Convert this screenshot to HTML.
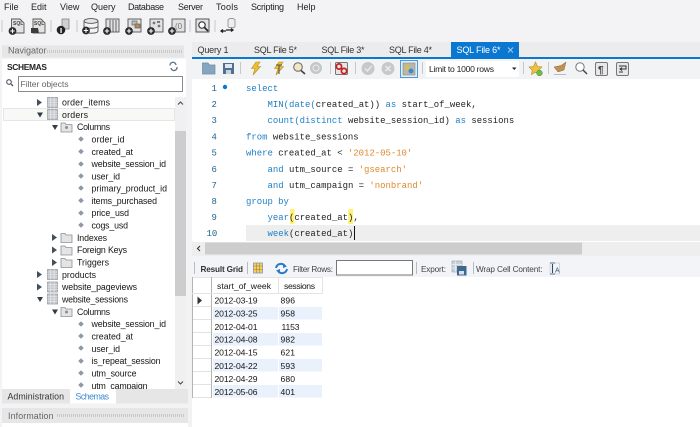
<!DOCTYPE html>
<html><head><meta charset="utf-8"><style>
html,body{margin:0;padding:0;width:700px;height:427px;overflow:hidden;background:#fff}
svg{display:block;filter:blur(.3px)}
text{font-family:"Liberation Sans",sans-serif;font-size:8.8px;fill:#151515}
.m text{font-size:9px;fill:#222}
.c text{font-family:"Liberation Mono",monospace;font-size:8.95px;fill:#222}
.c .k{fill:#1f7fc4}.c .s{fill:#e0882c}.c .n{fill:#1f628e}
.r text{font-size:8.6px;fill:#151515}
</style></head><body>
<svg width="700" height="427" viewBox="0 0 700 427" xmlns="http://www.w3.org/2000/svg">
<defs>
<g id="plus"><circle cx="0" cy="0" r="3.9" fill="#2a2a2a"/><path d="M-2.200 0H2.200M0-2.200V2.200" stroke="#fff" stroke-width="1.100"/></g>
<g id="tbl"><rect x="0" y="0" width="10" height="10" fill="#c3c7cc" stroke="#8f959c" stroke-width=".7"/><path d="M3.300 0V10M6.600 0V10M0 2.500H10M0 5H10M0 7.500H10" stroke="#f0f0f0" stroke-width=".6"/></g>
<path id="d" d="M0-2.800L2.800 0 0 2.800-2.800 0Z" fill="#8d99a8"/>
<path id="ar" d="M0-3.500L5 0 0 3.500Z" fill="#444f5c"/>
<path id="ad" d="M-3-2H3L0 3Z" fill="#333d4a"/>
<g id="fold"><path d="M0 1H4L5 2.500H11V10H0Z" fill="#e4e4e4" stroke="#8a8f96" stroke-width=".8"/></g>
<g id="bolt"><path d="M7 0L11 0 8 4.500H11.500L4 13 6 6.500H2.500Z" fill="#f0c030" stroke="#b58a20" stroke-width=".6"/></g>
</defs>

<rect width="700" height="427" fill="#f3f3f6"/>
<g class="m">
<text x="4" y="10">File</text><text x="31" y="10">Edit</text><text x="60" y="10">View</text><text x="91" y="10">Query</text><text x="128" y="10" textLength="36">Database</text><text x="178" y="10" textLength="25">Server</text><text x="216" y="10" textLength="22">Tools</text><text x="251" y="10" textLength="33">Scripting</text><text x="297" y="10">Help</text>
</g>

<!-- main toolbar -->
<g stroke="#c4c8cc" stroke-width="1"><path d="M2 20V32M51 20V32M77 20V32M190 20V32M215 20V32"/></g>
<g>
<path d="M11.500 19H20L24 23V33H11.500Z" fill="#e2e2e2" stroke="#555" stroke-width=".9"/><text x="13" y="25" style="font-size:5px;font-weight:bold;fill:#444">SQL</text><use href="#plus" x="12.500" y="31"/>
<path d="M33 19H41L45 23V33H33Z" fill="#e2e2e2" stroke="#555" stroke-width=".9"/><text x="34" y="25" style="font-size:5px;font-weight:bold;fill:#444">SQL</text><path d="M31 28H38L39 33H31Z" fill="#3c3c3c"/>
<rect x="62" y="19" width="7" height="10" fill="#d0d0d0" stroke="#777" stroke-width=".7"/><circle cx="61" cy="30" r="4.300" fill="#222"/><rect x="60.400" y="28" width="1.300" height="5" fill="#fff"/>
<ellipse cx="91" cy="21" rx="7" ry="2.400" fill="#e4e4e4" stroke="#555" stroke-width=".9"/><path d="M84 21V31C84 34 98 34 98 31V21M84 26C84 29 98 29 98 26" fill="none" stroke="#555" stroke-width=".9"/><use href="#plus" x="86" y="30.500"/>
<rect x="106" y="19" width="13" height="13" fill="#e2e2e2" stroke="#555" stroke-width=".9"/><path d="M110 20V32M113 20V32M116 20V32" stroke="#666" stroke-width="1"/><use href="#plus" x="107" y="31"/>
<rect x="128" y="19" width="13" height="13" fill="#e2e2e2" stroke="#555" stroke-width=".9"/><rect x="132" y="21" width="5" height="4" fill="#bbb" stroke="#666" stroke-width=".7"/><rect x="135" y="24" width="5" height="4" fill="#b58a50" stroke="#666" stroke-width=".7"/><use href="#plus" x="129" y="31"/>
<rect x="150" y="19" width="13" height="13" fill="#e2e2e2" stroke="#555" stroke-width=".9"/><circle cx="154" cy="23" r="1.400" fill="#777"/><circle cx="159" cy="26" r="1.400" fill="#777"/><rect x="157" y="21" width="3" height="2" fill="#777"/><use href="#plus" x="151" y="31"/>
<rect x="172" y="19" width="13" height="13" fill="#e2e2e2" stroke="#555" stroke-width=".9"/><text x="175" y="29" style="font-size:8px;fill:#777">(0</text><use href="#plus" x="172" y="31"/>
<rect x="196" y="19" width="13" height="13" fill="#e2e2e2" stroke="#555" stroke-width="1"/><circle cx="202" cy="25" r="3.200" fill="#fff" stroke="#333" stroke-width="1.200"/><path d="M204.500 27.500L208 31" stroke="#222" stroke-width="1.600"/>
<ellipse cx="231.500" cy="20" rx="3.500" ry="1.500" fill="#eee" stroke="#777" stroke-width=".7"/><path d="M228 20V26.500C228 28 235 28 235 26.500V20" fill="#eee" stroke="#777" stroke-width=".7"/><path d="M221 31H226M223 29.500L221 31 223 32.500M226 30H233M231 28.500L233 30 231 31.500" stroke="#222" stroke-width="1.300" fill="none"/>
</g>

<!-- left panel -->
<rect x="2" y="45.500" width="182" height="12" fill="#e6e6e6"/>
<path d="M47 51.500H183" stroke="#c8c8c8" stroke-width="3" stroke-dasharray="1 1"/>
<text x="8" y="53.500" style="fill:#666;font-size:9px">Navigator</text>
<rect x="2" y="59" width="184" height="330" fill="#fff"/>
<text x="7" y="70" textLength="40" style="font-weight:bold;font-size:8.400px;fill:#222">SCHEMAS</text>
<path d="M170 65.500A3 3 0 0 1 176 65M177 67A3 3 0 0 1 171 68" fill="none" stroke="#5a6f86" stroke-width="1.300"/>
<circle cx="9" cy="82" r="2.300" fill="none" stroke="#556" stroke-width="1.100"/><path d="M11 84L13 86" stroke="#556" stroke-width="1.300"/>
<rect x="18.500" y="76.500" width="164" height="15" fill="#fff" stroke="#8a8a8a"/>
<text x="20.500" y="87" textLength="48" style="fill:#666;font-size:8.600px">Filter objects</text>

<!-- tree -->
<rect x="3.500" y="108.500" width="171" height="12" fill="#f8f8f6" stroke="#e6e6e6"/>
<use href="#ar" x="37" y="102.500"/><use href="#tbl" x="47.500" y="97.500"/>
<use href="#ad" x="40" y="114.500"/><use href="#tbl" x="47.500" y="109.500"/>
<use href="#ad" x="55" y="127"/><use href="#fold" x="61" y="122"/><circle cx="66.500" cy="127.500" r="1.500" fill="#8a8f96"/>
<use href="#ar" x="52" y="237.500"/><use href="#fold" x="61" y="232.500"/>
<use href="#ar" x="52" y="250"/><use href="#fold" x="61" y="245"/>
<use href="#ar" x="52" y="262.500"/><use href="#fold" x="61" y="257.500"/>
<use href="#ar" x="37" y="274.500"/><use href="#tbl" x="47.500" y="269.500"/>
<use href="#ar" x="37" y="287"/><use href="#tbl" x="47.500" y="282"/>
<use href="#ad" x="40" y="299"/><use href="#tbl" x="47.500" y="294"/>
<use href="#ad" x="55" y="311.500"/><use href="#fold" x="61" y="306.500"/><circle cx="66.500" cy="312" r="1.500" fill="#8a8f96"/>
<g fill="#8d99a8"><use href="#d" x="81" y="139"/><use href="#d" x="81" y="151.500"/><use href="#d" x="81" y="164"/><use href="#d" x="81" y="176"/><use href="#d" x="81" y="188"/><use href="#d" x="81" y="200.500"/><use href="#d" x="81" y="213"/><use href="#d" x="81" y="225"/><use href="#d" x="81" y="324"/><use href="#d" x="81" y="336"/><use href="#d" x="81" y="348"/><use href="#d" x="81" y="361"/><use href="#d" x="81" y="373"/><use href="#d" x="81" y="385"/></g>
<g>
<text x="62" y="105.500" textLength="48">order_items</text><text x="62" y="118" textLength="26">orders</text><text x="77" y="130" textLength="33">Columns</text>
<text x="91.500" y="142.500" textLength="33">order_id</text><text x="91.500" y="155" textLength="41.500">created_at</text><text x="91.500" y="167" textLength="74.500">website_session_id</text><text x="91.500" y="179.500" textLength="28.500">user_id</text><text x="91.500" y="191.500" textLength="75.500">primary_product_id</text><text x="91.500" y="204" textLength="65.500">items_purchased</text><text x="91.500" y="216" textLength="37.500">price_usd</text><text x="91.500" y="228.500" textLength="36.500">cogs_usd</text>
<text x="77" y="241" textLength="30">Indexes</text><text x="77" y="253" textLength="50">Foreign Keys</text><text x="77" y="265.500" textLength="32">Triggers</text>
<text x="62" y="278" textLength="34">products</text><text x="62" y="290" textLength="75">website_pageviews</text><text x="62" y="302.500" textLength="66">website_sessions</text><text x="77" y="315" textLength="33">Columns</text>
<text x="91.500" y="327" textLength="74.500">website_session_id</text><text x="91.500" y="339.500" textLength="41.500">created_at</text><text x="91.500" y="352" textLength="28.500">user_id</text><text x="91.500" y="364" textLength="69">is_repeat_session</text><text x="91.500" y="376.500" textLength="45">utm_source</text><text x="91.500" y="389" textLength="56">utm_campaign</text>
</g>
<!-- tree scrollbar -->
<rect x="175" y="97" width="11" height="292" fill="#f0f0f0"/>
<rect x="175" y="131" width="11" height="165" fill="#cdcdcd"/>
<path d="M178 104.500L180.500 102 183 104.500M178 381.500L180.500 384 183 381.500" fill="none" stroke="#444" stroke-width="1"/>
<!-- nav tabs -->
<rect x="2" y="389" width="186" height="14.500" fill="#e6e6e6"/>
<rect x="70" y="389" width="46" height="14.500" fill="#fff"/>
<text x="7.500" y="399.500" textLength="56.500" style="fill:#333">Administration</text>
<text x="75.500" y="399.500" textLength="33.500" style="fill:#3c8ad0">Schemas</text>
<rect x="2" y="408" width="186" height="15" fill="#e6e6e6"/>
<path d="M57 415.500H184" stroke="#c8c8c8" stroke-width="3" stroke-dasharray="1 1"/>
<text x="8" y="419" textLength="45.500" style="fill:#666">Information</text>
<rect x="2" y="423" width="186" height="4" fill="#fff"/>

<!-- editor tabs -->
<rect x="192" y="42" width="508" height="16" fill="#ececec"/>
<rect x="451" y="42" width="68" height="15.500" fill="#0a78d0"/>
<rect x="192" y="57" width="508" height="2" fill="#0a78d0"/>
<text x="197.500" y="53" textLength="31" style="font-size:9px;fill:#333">Query 1</text>
<text x="254" y="53" textLength="43" style="font-size:9px;fill:#333">SQL File 5*</text>
<text x="321.500" y="53" textLength="43" style="font-size:9px;fill:#333">SQL File 3*</text>
<text x="389" y="53" textLength="43" style="font-size:9px;fill:#333">SQL File 4*</text>
<text x="456.500" y="53" textLength="44" style="font-size:9px;fill:#fff">SQL File 6*</text>
<path d="M508 47.500L513 52.500M513 47.500L508 52.500" stroke="#a8cdec" stroke-width="1"/>

<!-- query toolbar -->
<rect x="192" y="59" width="508" height="19" fill="#f2f3f5"/>
<g stroke="#c8c8c8"><path d="M240.500 62V74M330.500 62V74M355.500 62V74M422.500 62V74M523.500 62V74M548.500 62V74"/></g>
<path d="M202.500 63H208L209.500 65H215V74H202.500Z" fill="#86a6c0" stroke="#6a8aa4" stroke-width=".7"/>
<path d="M223 63H234V74H223Z" fill="#4f7090"/><rect x="225" y="64" width="7" height="4" fill="#dfe6ee"/><rect x="226" y="70" width="5" height="4" fill="#c8d2dc"/>
<use href="#bolt" x="249" y="62"/><use href="#bolt" x="272" y="62"/><path d="M276 65H282M279 65V74" stroke="#555" stroke-width="1.100"/>
<circle cx="298" cy="67" r="4.300" fill="#f0e6c8" stroke="#666" stroke-width="1"/><path d="M301 70.500L305 74" stroke="#444" stroke-width="1.600"/>
<circle cx="316" cy="68" r="6" fill="#c6c6c6"/><circle cx="316" cy="68" r="3" fill="none" stroke="#ededed" stroke-width="1"/>
<rect x="335.500" y="62.500" width="12" height="12" rx="1" fill="#e6e6e6" stroke="#777"/><circle cx="339" cy="66.500" r="2.600" fill="none" stroke="#c81e1e" stroke-width="1.700"/><circle cx="344" cy="71" r="2.600" fill="none" stroke="#c81e1e" stroke-width="1.700"/>
<circle cx="368" cy="68.500" r="6.500" fill="#c8c8c8"/><path d="M365 68.500L367.500 71 371.500 66" fill="none" stroke="#eee" stroke-width="1.300"/>
<circle cx="388" cy="68.500" r="6.500" fill="#c8c8c8"/><path d="M385.500 66L390.500 71M390.500 66L385.500 71" stroke="#eee" stroke-width="1.300"/>
<rect x="400.500" y="60.500" width="17" height="17" fill="#e4ecf4" stroke="#4a9ade"/><rect x="403" y="63" width="12" height="12" fill="#b8b8a8" stroke="#888" stroke-width=".6"/><path d="M408 64L406 68H409L407 71" fill="none" stroke="#eac030" stroke-width="1.200"/><circle cx="411" cy="71" r="2.500" fill="#3a8ad8"/>
<rect x="426" y="61" width="93" height="16" fill="#fff"/>
<text x="429" y="72" textLength="65" style="font-size:8.600px;fill:#222">Limit to 1000 rows</text>
<path d="M512 67.500H516.500L514.200 70Z" fill="#222"/>
<path d="M535.500 62L537.500 66.500 542 67 538.800 70 539.500 74.500 535.500 72.200 531.500 74.500 532.200 70 529 67 533.500 66.500Z" fill="#eec040" stroke="#b08a20" stroke-width=".6"/><circle cx="539.500" cy="73" r="2.800" fill="#6abf4a" stroke="#3e8a2a" stroke-width=".5"/>
<path d="M554 67L561 65.500 566 62 564 70 558 72Z" fill="#c09050" stroke="#8a6a3a" stroke-width=".5"/><path d="M554 74.500H566" stroke="#bbb" stroke-width="1"/>
<circle cx="580" cy="67" r="4.200" fill="#fff" stroke="#777" stroke-width="1"/><path d="M583 70L587 74" stroke="#444" stroke-width="1.500"/>
<rect x="595.500" y="62.500" width="12" height="13" rx="1.500" fill="#e8e8e8" stroke="#777"/><text x="598" y="73" style="font-size:10px;font-weight:bold;fill:#444">¶</text>
<rect x="616.500" y="62.500" width="12" height="13" rx="1.500" fill="#e8e8e8" stroke="#777"/><path d="M619 66H626V69H620M622 67.500L620 69 622 70.500M619 72H623" fill="none" stroke="#333" stroke-width="1"/>

<!-- editor -->
<rect x="192" y="79" width="508" height="162" fill="#fff"/>
<rect x="246" y="225" width="454" height="16" fill="#eeeeee"/>
<rect x="290" y="209" width="4.500" height="15" fill="#fff27a"/><rect x="348.200" y="209" width="4.800" height="15" fill="#fff27a"/>
<circle cx="225" cy="87" r="2.200" fill="#0a78d0"/>
<g class="c">
<text x="211.500" y="91" class="n">1</text><text x="211.500" y="107" class="n">2</text><text x="211.500" y="123" class="n">3</text><text x="211.500" y="139.500" class="n">4</text><text x="211.500" y="155.500" class="n">5</text><text x="211.500" y="172" class="n">6</text><text x="211.500" y="188" class="n">7</text><text x="211.500" y="204" class="n">8</text><text x="211.500" y="220" class="n">9</text><text x="206.500" y="236" class="n">10</text>
<text x="246" y="91" class="k">select</text>
<text x="267.500" y="107"><tspan class="k">MIN(date(</tspan>created_at)) <tspan class="k">as</tspan> start_of_week,</text>
<text x="267.500" y="123"><tspan class="k">count(distinct</tspan> website_session_id) <tspan class="k">as</tspan> sessions</text>
<text x="246" y="139.500"><tspan class="k">from</tspan> website_sessions</text>
<text x="246" y="155.500"><tspan class="k">where</tspan> created_at &lt; <tspan class="s">'2012-05-10'</tspan></text>
<text x="267.500" y="172"><tspan class="k">and</tspan> utm_source = <tspan class="s">'gsearch'</tspan></text>
<text x="267.500" y="188"><tspan class="k">and</tspan> utm_campaign = <tspan class="s">'nonbrand'</tspan></text>
<text x="246" y="204" class="k">group by</text>
<text x="267.500" y="220"><tspan class="k">year</tspan>(created_at),</text>
<text x="267.500" y="236"><tspan class="k">week</tspan>(created_at)</text>
</g>
<path d="M354.500 226V240" stroke="#111" stroke-width="1"/>

<!-- h scroll -->
<rect x="192" y="241" width="508" height="1" fill="#fff"/>
<rect x="192" y="242" width="508" height="14" fill="#eeeeee"/>
<rect x="205" y="242.500" width="377" height="12" fill="#cdcdcd"/>
<path d="M200 246L197.500 248.500 200 251" fill="none" stroke="#333" stroke-width="1.100"/>

<!-- result toolbar -->
<rect x="192" y="256" width="508" height="21" fill="#f3f4f8"/>
<g stroke="#b8bcc0"><path d="M194.500 262V274M247.500 262V274M416.500 262V274M473.500 262V274"/></g>
<text x="200.500" y="272" textLength="42.500" style="font-weight:bold;font-size:8.200px;fill:#333">Result Grid</text>
<rect x="253.500" y="263" width="9" height="10" fill="#f5d060" stroke="#8a98a8" stroke-width=".8"/><path d="M256.500 263V273M259.500 263V273M253.500 266H262.500M253.500 269.500H262.500" stroke="#8a7a40" stroke-width=".5"/>
<path d="M276 268A5 5 0 0 1 285 266M287 269A5 5 0 0 1 278 271" fill="none" stroke="#2a7ac8" stroke-width="2"/><path d="M283 263.500L287 266.500 283 268ZM280 273.500L276 270.500 280 269Z" fill="#2a7ac8"/>
<text x="293" y="272" textLength="40" style="font-size:8.200px;fill:#444">Filter Rows:</text>
<rect x="336.500" y="260.500" width="76" height="14.500" fill="#fff" stroke="#777"/>
<text x="421" y="272" textLength="25" style="font-size:8.200px;fill:#444">Export:</text>
<rect x="452" y="261" width="10" height="11" fill="#c8d0d8" stroke="#9aa4ae" stroke-width=".6"/><path d="M455.500 261V272M452 264.500H462M452 268H462" stroke="#eee" stroke-width=".7"/><rect x="457" y="266" width="9.500" height="9.500" fill="#3a6a90"/><rect x="459" y="271" width="5" height="3.500" fill="#dde"/>
<text x="476" y="272" textLength="66.500" style="font-size:8.200px;fill:#444">Wrap Cell Content:</text>
<path d="M550 263H555M550 274H555M552.500 264V273" stroke="#2a4a70" stroke-width="1.100"/><rect x="550" y="263" width="9.500" height="11" fill="none" stroke="#9ab" stroke-width=".4"/><text x="555" y="272.500" style="font-size:7px;fill:#456">A</text>

<!-- grid -->
<rect x="190" y="277" width="2" height="150" fill="#f2f2f2"/>
<rect x="192" y="277" width="508" height="150" fill="#fff"/>
<path d="M192 277.500H323" stroke="#e4e4e4" stroke-width="1"/>
<path d="M192.500 277V398M211.500 277V398" stroke="#b4b4b4" stroke-width="1" fill="none"/>
<path d="M278.500 278V293.500M322.500 278V293.500M192 293.500H323" stroke="#e4e4e4" stroke-width="1"/>
<g stroke="#e2e2e2"><path d="M193 306.500H211M193 319.500H211M193 332.500H211M193 345.500H211M193 358.500H211M193 371.500H211M193 384.500H211M193 397.500H211"/></g>
<g fill="#e9f1fc"><rect x="213" y="307" width="65" height="12.500"/><rect x="279" y="307" width="43" height="12.500"/><rect x="213" y="333" width="65" height="12.500"/><rect x="279" y="333" width="43" height="12.500"/><rect x="213" y="359" width="65" height="12.500"/><rect x="279" y="359" width="43" height="12.500"/><rect x="213" y="385" width="65" height="12.500"/><rect x="279" y="385" width="43" height="12.500"/></g>
<path d="M197.500 296.500L202 300.500 197.500 304.500Z" fill="#333"/>
<g class="r">
<text x="217" y="289" textLength="54">start_of_week</text><text x="284" y="289" textLength="31">sessions</text>
<text x="214.500" y="303.500" textLength="43">2012-03-19</text><text x="280.500" y="303.500" textLength="14.500">896</text>
<text x="214.500" y="316.500" textLength="43">2012-03-25</text><text x="280.500" y="316.500" textLength="14.500">958</text>
<text x="214.500" y="330" textLength="43">2012-04-01</text><text x="281.500" y="330" textLength="18">1153</text>
<text x="214.500" y="342.500" textLength="43">2012-04-08</text><text x="280.500" y="342.500" textLength="14.500">982</text>
<text x="214.500" y="355.500" textLength="43">2012-04-15</text><text x="280.500" y="355.500" textLength="14.500">621</text>
<text x="214.500" y="369" textLength="43">2012-04-22</text><text x="280.500" y="369" textLength="14.500">593</text>
<text x="214.500" y="382" textLength="43">2012-04-29</text><text x="280.500" y="382" textLength="14.500">680</text>
<text x="214.500" y="395" textLength="43">2012-05-06</text><text x="280.500" y="395" textLength="14.500">401</text>
</g>
</svg>
</body></html>
